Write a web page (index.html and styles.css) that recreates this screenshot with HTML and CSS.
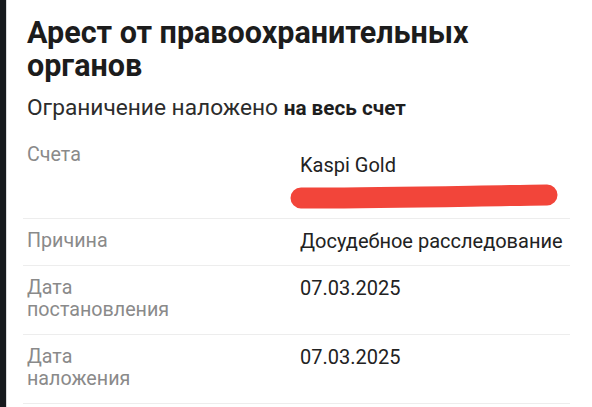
FILE: index.html
```html
<!DOCTYPE html>
<html lang="ru">
<head>
<meta charset="utf-8">
<title>Арест от правоохранительных органов</title>
<link rel="stylesheet" href="styles.css">
</head>
<body>
<div class="screen">
  <div class="edge"></div>
  <main class="content">
    <h1 class="title">Арест от правоохранительных органов</h1>
    <p class="subtitle">Ограничение наложено <b>на весь счет</b></p>
    <div class="list">
      <div class="row row-accounts">
        <div class="label">Счета</div>
        <div class="value">
          <div class="value-text account-name">Kaspi Gold</div>
          <svg class="redact" width="270" height="27" viewBox="0 0 270 27" aria-hidden="true">
            <path d="M11 15 C 80 15.5, 180 13, 257 12" fill="none" stroke="#f2453a" stroke-width="21" stroke-linecap="round"/>
          </svg>
        </div>
      </div>
      <div class="row">
        <div class="label">Причина</div>
        <div class="value"><div class="value-text">Досудебное расследование</div></div>
      </div>
      <div class="row">
        <div class="label">Дата<br>постановления</div>
        <div class="value"><div class="value-text">07.03.2025</div></div>
      </div>
      <div class="row">
        <div class="label">Дата<br>наложения</div>
        <div class="value"><div class="value-text">07.03.2025</div></div>
      </div>
    </div>
  </main>
</div>
</body>
</html>
```
FILE: styles.css
```css
html, body {
  margin: 0;
  padding: 0;
  background: #ffffff;
}

body {
  font-family: Roboto, "Noto Sans", "Liberation Sans", sans-serif;
  color: #222222;
  width: 592px;
  height: 407px;
  overflow: hidden;
}

.screen {
  display: flex;
  height: 407px;
}

.edge {
  width: 6px;
  flex: none;
  background: #16191d;
  border-right: 1px solid #d9dadb;
}

.content {
  flex: 1;
  padding: 16px 22px 0 16px;
}

.title {
  margin: 0 0 0 4px;
  font-size: 30.5px;
  line-height: 33px;
  font-weight: 700;
  color: #1c1c1c;
}

.subtitle {
  margin: 13px 0 0 4px;
  font-size: 22.7px;
  line-height: 25px;
  color: #2c2c2c;
}

.subtitle b {
  font-weight: 700;
  font-size: 20.7px;
  color: #1e1e1e;
}

.list {
  margin-top: 12px;
}

.row {
  display: flex;
  padding: 11px 0 13px 4px;
  border-bottom: 1px solid #ededed;
}

.row-accounts {
  padding-bottom: 8px;
}

.label {
  width: 273px;
  flex: none;
  font-size: 19.7px;
  line-height: 22px;
  color: #8a8a8a;
}

.value {
  flex: 1;
  display: flex;
  flex-direction: column;
}

.value-text {
  font-size: 20px;
  line-height: 22px;
  color: #222222;
}

.account-name {
  margin-top: 10px;
}

.redact {
  display: block;
  margin: 7px 0 0 -10px;
}
```
